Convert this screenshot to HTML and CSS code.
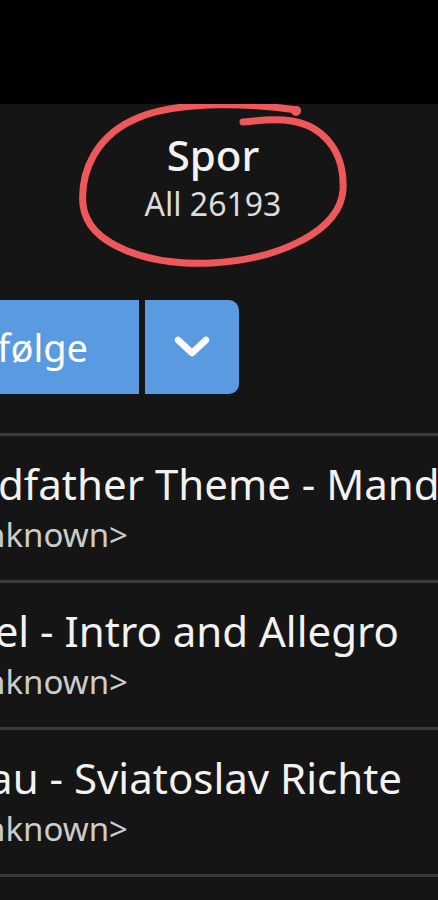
FILE: index.html
```html
<!DOCTYPE html>
<html lang="nb">

<head>
	<meta charset="UTF-8">
	<meta name="viewport" content="width=device-width, initial-scale=1.0">
	<title>Spor</title>
	<link rel="stylesheet" href="styles.css">
</head>

<body>
	<div class="status-bar"></div>

	<header class="library-header">
		<h1>Spor</h1>
		<p class="track-count">All 26193</p>
		<!-- hand-drawn marker around the title -->
		<svg class="scribble" viewBox="0 104 438 180" width="438" height="180" aria-hidden="true">
			<path d="M297 110 C250 103, 180 101, 140 117 C96 134, 80 172, 83 205 C88 246, 150 266, 212 263 C282 259, 340 230, 343 190 C345 150, 322 126, 292 121 C272 118, 256 121, 243 122"
				fill="none" stroke="#ef585b" stroke-width="7" stroke-linecap="round" stroke-linejoin="round" />
			<circle cx="296" cy="111" r="5" fill="#ef585b" />
		</svg>
	</header>

	<div class="actions">
		<button class="btn shuffle">Tilfeldig rekkefølge</button>
		<button class="btn more" aria-label="Flere valg">
			<svg viewBox="0 0 36 22" width="36" height="22">
				<polyline points="4,4 18,17 32,4" fill="none" stroke="#fff" stroke-width="6.5" stroke-linecap="round" stroke-linejoin="round" />
			</svg>
		</button>
	</div>

	<ul class="tracks">
		<li class="track">
			<div class="track-title">Godfather Theme - Mandolin</div>
			<div class="track-artist">&lt;Unknown&gt;</div>
		</li>
		<li class="track">
			<div class="track-title">Abel - Intro and Allegro</div>
			<div class="track-artist">&lt;Unknown&gt;</div>
		</li>
		<li class="track">
			<div class="track-title">Grau - Sviatoslav Richte</div>
			<div class="track-artist">&lt;Unknown&gt;</div>
		</li>
		<li class="track">
			<div class="track-title">Grieg - Lyric Pieces</div>
			<div class="track-artist">&lt;Unknown&gt;</div>
		</li>
	</ul>
</body>

</html>
```

FILE: styles.css
```css
body {
	margin: 0;
	padding: 0;
	background-color: #151515;
	color: #f2f2f2;
	font-family: 'Noto Sans', 'Open Sans', sans-serif;
	overflow: hidden;
}

.status-bar {
	height: 104px;
	background-color: #000;
}

.library-header {
	position: relative;
	padding: 22px 12px 0 0;
	text-align: center;
}

.library-header h1 {
	margin: 0;
	font-size: 42px;
	font-weight: 500;
	line-height: normal;
}

.track-count {
	margin: -1px 0 0;
	font-size: 32px;
	color: #dcdcdc;
	line-height: normal;
}

.scribble {
	position: absolute;
	top: 0;
	left: 0;
}

.actions {
	display: flex;
	gap: 6px;
	margin: 75px 0 39px -261px;
}

.btn {
	height: 94px;
	border: none;
	background-color: #5a9ae0;
	color: #fff;
	font-family: inherit;
	padding: 0;
}

.shuffle {
	width: 400px;
	display: flex;
	align-items: center;
	justify-content: flex-end;
	padding-right: 51px;
	font-size: 38px;
	border-radius: 10px 0 0 10px;
}

.more {
	width: 94px;
	border-radius: 0 10px 10px 0;
	display: flex;
	align-items: center;
	justify-content: center;
}

.more svg {
	display: block;
}

.tracks {
	list-style: none;
	margin: 0 0 0 -58px;
	padding: 0;
	white-space: nowrap;
}

.track {
	border-top: 3px solid #3a3a3a;
	padding: 19px 0 23px;
}

.track-title {
	font-size: 42px;
	line-height: 57px;
	color: #f2f2f2;
}

.track-artist {
	font-size: 33px;
	line-height: 45px;
	color: #cccccc;
}
```
